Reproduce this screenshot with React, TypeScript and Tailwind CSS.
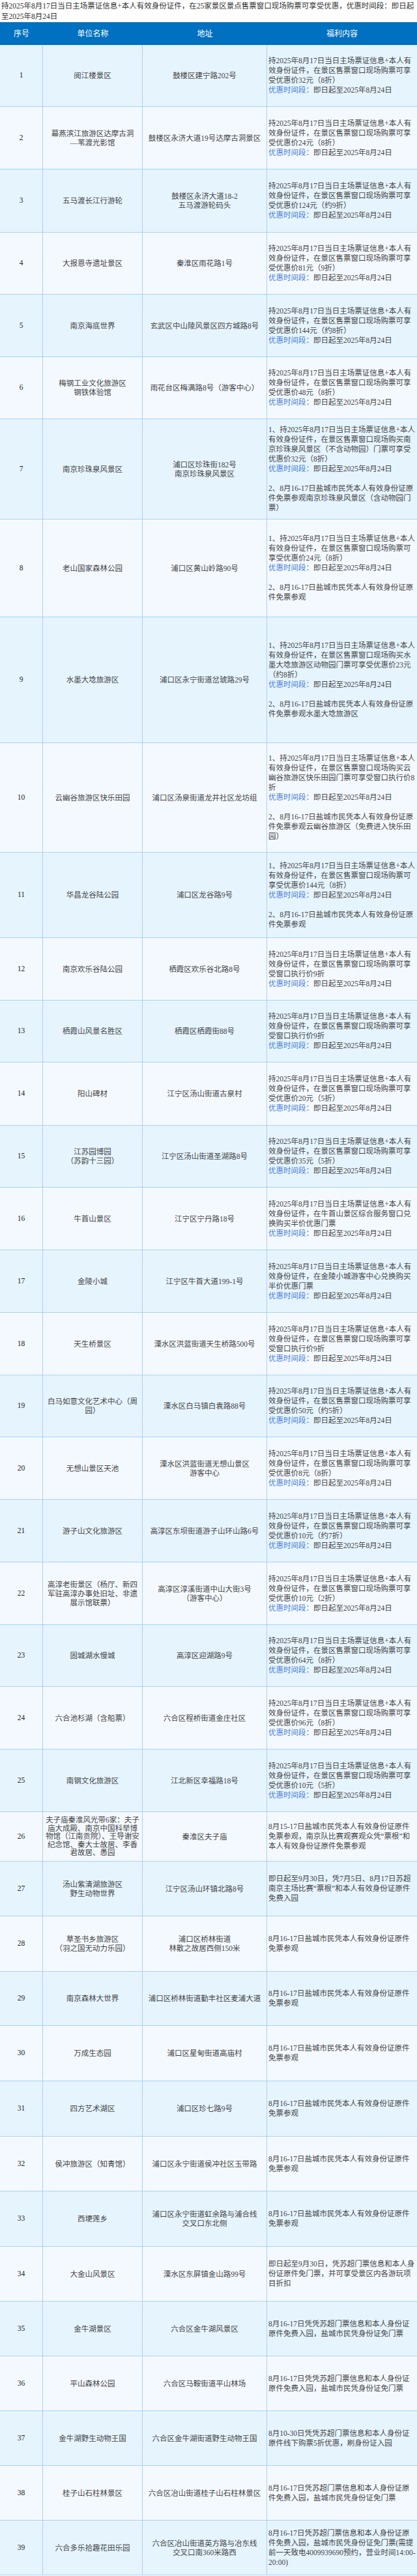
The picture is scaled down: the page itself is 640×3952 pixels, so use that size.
import React from "react";

type P = { t: string; p?: boolean; gap?: boolean };
type Row = { n: string; a: string; b: P[]; h: number; nl?: string };

const PERIOD = "即日起至2025年8月24日";
const std = (tail: string): P[] => [
  { t: "持2025年8月17日当日主场票证信息+本人有效身份证件，在景区售票窗口现场购票可享受" + tail },
  { t: PERIOD, p: true },
];
const two = (first: string, second: string): P[] => [
  { t: first },
  { t: PERIOD, p: true },
  { t: second, gap: true },
];
const FREE = "8月16-17日盐城市民凭本人有效身份证原件免票参观";

const rows: Row[] = [
  { n: "阅江楼景区", a: "鼓楼区建宁路202号", b: std("优惠价32元（8折）"), h: 95 },
  { n: "幕燕滨江旅游区达摩古洞\n—苇渡光影馆", a: "鼓楼区永济大道19号达摩古洞景区", b: std("优惠价24元（8折）"), h: 96 },
  { n: "五马渡长江行游轮", a: "鼓楼区永济大道18-2\n五马渡游轮码头", b: std("优惠价124元（约9折）"), h: 97 },
  { n: "大报恩寺遗址景区", a: "秦淮区雨花路1号", b: std("优惠价81元（9折）"), h: 95 },
  { n: "南京海底世界", a: "玄武区中山陵风景区四方城路8号", b: std("优惠价144元（约8折）"), h: 96 },
  { n: "梅钢工业文化旅游区\n钢铁体验馆", a: "雨花台区梅满路8号（游客中心）", b: std("优惠价48元（8折）"), h: 95 },
  {
    n: "南京珍珠泉风景区",
    a: "浦口区珍珠街182号\n南京珍珠泉风景区",
    b: two(
      "1、持2025年8月17日当日主场票证信息+本人有效身份证件，在景区售票窗口现场购买南京珍珠泉风景区（不含动物园）门票可享受优惠价32元（8折）",
      "2、8月16-17日盐城市民凭本人有效身份证原件免票参观南京珍珠泉风景区（含动物园门票）"
    ),
    h: 154,
  },
  {
    n: "老山国家森林公园",
    a: "浦口区黄山岭路90号",
    b: two("1、持2025年8月17日当日主场票证信息+本人有效身份证件，在景区售票窗口现场购票可享受优惠价24元（8折）", "2、" + FREE),
    h: 150,
  },
  {
    n: "水墨大埝旅游区",
    a: "浦口区永宁街道岔琥路29号",
    b: two(
      "1、持2025年8月17日当日主场票证信息+本人有效身份证件，在景区售票窗口现场购买水墨大埝旅游区动物园门票可享受优惠价23元（约8折）",
      "2、8月16-17日盐城市民凭本人有效身份证原件免票参观水墨大埝旅游区"
    ),
    h: 193,
  },
  {
    n: "云幽谷旅游区快乐田园",
    a: "浦口区汤泉街道龙井社区龙坊组",
    b: two(
      "1、持2025年8月17日当日主场票证信息+本人有效身份证件，在景区售票窗口现场购买云幽谷旅游区快乐田园门票可享受窗口执行价8折",
      "2、8月16-17日盐城市民凭本人有效身份证原件免票参观云幽谷旅游区（免费进入快乐田园）"
    ),
    h: 168,
  },
  {
    n: "华昌龙谷陆公园",
    a: "浦口区龙谷路9号",
    b: two("1、持2025年8月17日当日主场票证信息+本人有效身份证件，在景区售票窗口现场购票可享受优惠价144元（8折）", "2、" + FREE),
    h: 131,
  },
  { n: "南京欢乐谷陆公园", a: "栖霞区欢乐谷北路8号", b: std("窗口执行价9折"), h: 96 },
  { n: "栖霞山风景名胜区", a: "栖霞区栖霞街88号", b: std("窗口执行价9折"), h: 95 },
  { n: "阳山碑材", a: "江宁区汤山街道古泉村", b: std("优惠价20元（5折）"), h: 97 },
  { n: "江苏园博园\n（苏韵十三园）", a: "江宁区汤山街道圣湖路8号", b: std("优惠价35元（5折）"), h: 95 },
  {
    n: "牛首山景区",
    a: "江宁区宁丹路18号",
    b: [{ t: "持2025年8月17日当日主场票证信息+本人有效身份证件，在牛首山景区综合服务窗口兑换购买半价优惠门票" }, { t: PERIOD, p: true }],
    h: 96,
  },
  {
    n: "金陵小城",
    a: "江宁区牛首大道199-1号",
    b: [{ t: "持2025年8月17日当日主场票证信息+本人有效身份证件，在金陵小城游客中心兑换购买半价优惠门票" }, { t: PERIOD, p: true }],
    h: 96,
  },
  { n: "天生桥景区", a: "溧水区洪蓝街道天生桥路500号", b: std("窗口执行价9折"), h: 96 },
  { n: "白马如意文化艺术中心（周园）", a: "溧水区白马镇白袁路88号", b: std("优惠价50元（约5折）"), h: 95 },
  { n: "无想山景区天池", a: "溧水区洪蓝街道无想山景区\n游客中心", b: std("优惠价8元（8折）"), h: 96 },
  { n: "游子山文化旅游区", a: "高淳区东坝街道游子山环山路6号", b: std("优惠价10元（约7折）"), h: 96 },
  { n: "高淳老街景区（杨厅、新四军驻高淳办事处旧址、非遗展示馆联票）", a: "高淳区淳溪街道中山大街3号\n（游客中心）", b: std("优惠价10元（2折）"), h: 96 },
  { n: "固城湖水慢城", a: "高淳区迎湖路9号", b: std("优惠价64元（8折）"), h: 95 },
  { n: "六合池杉湖（含船票）", a: "六合区程桥街道金庄社区", b: std("优惠价96元（8折）"), h: 96 },
  { n: "南钢文化旅游区", a: "江北新区幸福路18号", b: std("优惠价10元（5折）"), h: 96 },
  {
    n: "夫子庙秦淮风光带6家：夫子庙大成殿、南京中国科举博物馆（江南贡院）、王导谢安纪念馆、秦大士故居、李香君故居、愚园",
    nl: "leading-[12.6px]",
    a: "秦淮区夫子庙",
    b: [{ t: "8月15-17日盐城市民凭本人有效身份证原件免票参观，南京队比赛观赛观众凭“票根”和本人有效身份证原件免票参观" }],
    h: 76,
  },
  {
    n: "汤山紫清湖旅游区\n野生动物世界",
    a: "江宁区汤山环镇北路8号",
    b: [{ t: "即日起至9月30日，凭7月5日、8月17日苏超南京主场比赛“票根”和本人有效身份证原件免费入园" }],
    h: 84,
  },
  { n: "草圣书乡旅游区\n（羽之国无动力乐园）", a: "浦口区桥林街道\n林散之故居西侧150米", b: [{ t: FREE }], h: 85 },
  { n: "南京森林大世界", a: "浦口区桥林街道勤丰社区麦浦大道", b: [{ t: FREE }], h: 83 },
  { n: "万成生态园", a: "浦口区星甸街道高庙村", b: [{ t: FREE }], h: 85 },
  { n: "四方艺术湖区", a: "浦口区珍七路9号", b: [{ t: FREE }], h: 85 },
  { n: "侯冲旅游区（知青馆）", a: "浦口区永宁街道侯冲社区玉带路", b: [{ t: FREE }], h: 84 },
  { n: "西埂莲乡", a: "浦口区永宁街道虹余路与浦合线\n交叉口东北侧", b: [{ t: FREE }], h: 85 },
  { n: "大金山风景区", a: "溧水区东屏镇金山路99号", b: [{ t: "即日起至9月30日，凭苏超门票信息和本人身份证原件免门票，并可享受景区内各游玩项目折扣" }], h: 84 },
  { n: "金牛湖景区", a: "六合区金牛湖风景区", b: [{ t: "8月16-17日凭凭苏超门票信息和本人身份证原件免费入园，盐城市民凭身份证免门票" }], h: 84 },
  { n: "平山森林公园", a: "六合区马鞍街道平山林场", b: [{ t: "8月16-17日凭凭苏超门票信息和本人身份证原件免费入园，盐城市民凭身份证免门票" }], h: 84 },
  { n: "金牛湖野生动物王国", a: "六合区金牛湖街道野生动物王国", b: [{ t: "8月10-30日凭凭苏超门票信息和本人身份证原件线下购票5折优惠，刷身份证入园" }], h: 84 },
  { n: "桂子山石柱林景区", a: "六合区冶山街道桂子山石柱林景区", b: [{ t: "8月16-17日凭苏超门票信息和本人身份证原件免费入园，盐城市民凭身份证免门票" }], h: 84 },
  {
    n: "六合多乐拾趣花田乐园",
    a: "六合区冶山街道英方路与冶东线\n交叉口南360米路西",
    b: [{ t: "8月16-17日凭苏超门票信息和本人身份证原件免费入园，盐城市民凭身份证免门票(需提前一天致电4009939690预约，营业时间14:00-20:00)" }],
    h: 84,
  },
];

const font = { fontFamily: '"Liberation Serif", "Noto Sans CJK SC", serif' };

export default function App() {
  return (
    <div className="w-[640px] bg-white text-[11.5px] text-[#444]" style={font}>
      <div className="h-[34px] px-[2px] leading-[16px] text-[#333] pt-[1px]">
        持2025年8月17日当日主场票证信息+本人有效身份证件，在25家景区景点售票窗口现场购票可享受优惠，优惠时间段：即日起至2025年8月24日
      </div>
      <div className="flex h-[35px] bg-[#0070c0] text-white text-[12px] items-center">
        <div className="w-[66px] text-center">序号</div>
        <div className="w-[153px] text-center">单位名称</div>
        <div className="w-[191px] text-center">地址</div>
        <div className="flex-1 text-center">福利内容</div>
      </div>
      {rows.map((r, i) => (
        <div
          key={i}
          className={`flex border-b border-[#a9d2f2] ${i % 2 === 0 ? "bg-[#e6f4fe]" : "bg-[#f4f9ff]"}`}
          style={{ height: r.h }}
        >
          <div className="w-[66px] flex items-center justify-center border-r border-[#a9d2f2] text-[#222]">{i + 1}</div>
          <div className={`w-[153px] flex items-center justify-center text-center border-r border-[#a9d2f2] px-[3px] whitespace-pre-line ${r.nl ?? "leading-[14px]"}`}>
            {r.n}
          </div>
          <div className="w-[191px] flex items-center justify-center text-center border-r border-[#a9d2f2] px-[3px] whitespace-pre-line leading-[14px]">
            {r.a}
          </div>
          <div className="flex-1 flex flex-col justify-center pl-[2px] pr-[2px] leading-[15px]">
            {r.b.map((p, j) =>
              p.p ? (
                <div key={j}>
                  <span className="text-[#4a7fd6]">优惠时间段：</span>
                  {p.t}
                </div>
              ) : (
                <div key={j} className={p.gap ? "mt-[15px]" : ""}>
                  {p.t}
                </div>
              )
            )}
          </div>
        </div>
      ))}
    </div>
  );
}
